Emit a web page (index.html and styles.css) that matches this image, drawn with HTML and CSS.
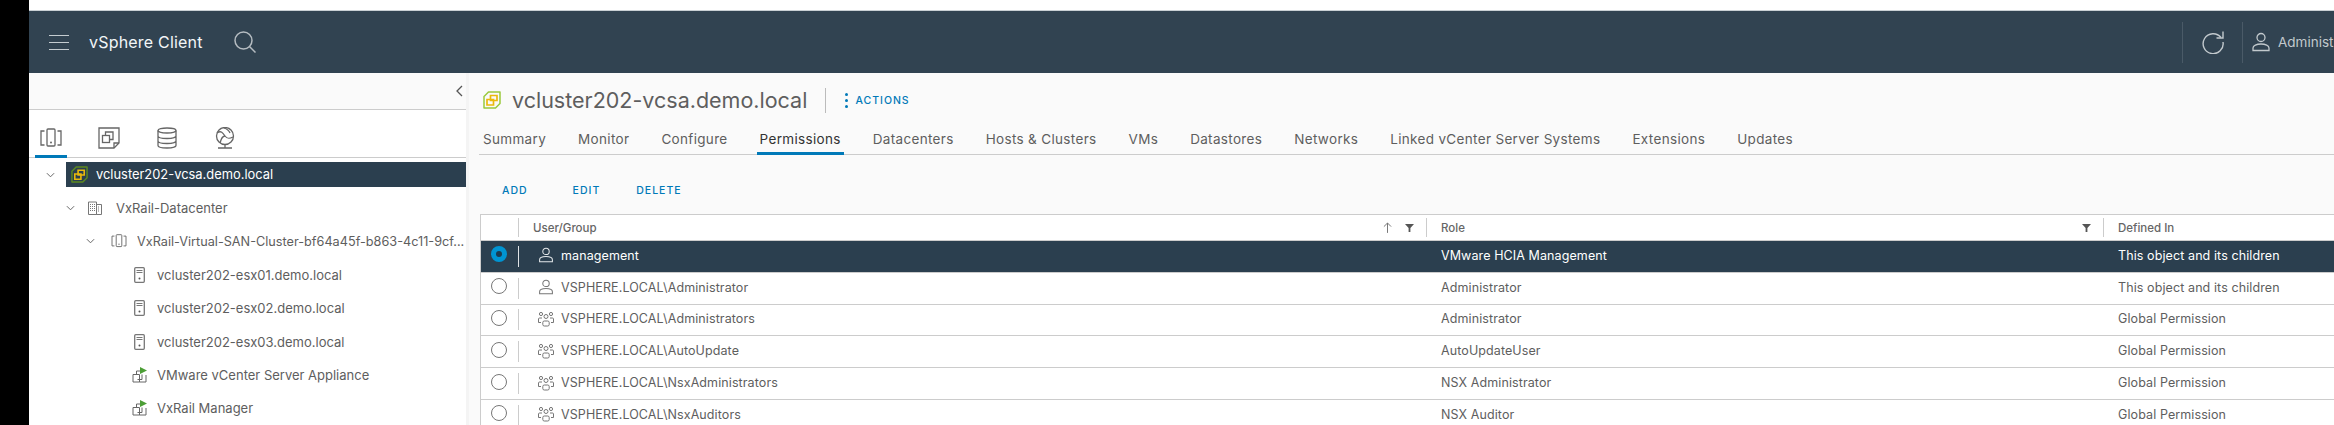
FILE: index.html
```html
<!DOCTYPE html>
<html lang="en">
<head>
<meta charset="utf-8">
<title>vSphere Client</title>
<link rel="stylesheet" href="styles.css">
</head>
<body>
<svg class="defs" width="0" height="0" aria-hidden="true">
  <defs>
    <symbol id="i-user" viewBox="0 0 18 20"><circle cx="9" cy="5.5" r="4" fill="none" stroke="currentColor" stroke-width="1.3"/><path d="M1 18.5v-2.6c0-2.2 3.5-3.9 8-3.9s8 1.700 8 3.900v2.600z" fill="none" stroke="currentColor" stroke-width="1.300"/></symbol>
    <symbol id="i-group" viewBox="0 0 16 16"><g fill="none" stroke="currentColor" stroke-width="1"><circle cx="8" cy="5.500" r="2"/><rect x="4.800" y="10" width="6.400" height="5" rx="1.500"/><circle cx="3" cy="3" r="1.600"/><circle cx="13" cy="3" r="1.600"/><path d="M4 7H1.500c-.6 0-1 .4-1 1v3.500H3M12 7h2.500c.6 0 1 .4 1 1v3.500H13"/></g></symbol>
    <symbol id="i-host" viewBox="0 0 11 16"><rect x=".7" y=".7" width="9.600" height="14.600" rx="1" fill="none" stroke="#777" stroke-width="1.300"/><path d="M2.500 3.500h6M2.500 5.500h6" stroke="#777"/><circle cx="5.500" cy="11.500" r="1" fill="#555"/></symbol>
    <symbol id="i-vm" viewBox="0 0 15 16"><g fill="none" stroke="#666" stroke-width="1"><path d="M1 7.500h6.500V15H1z"/><path d="M4.500 7.500V4H9M14 8v7H7.500"/><path d="M10 7.500v5H5.500"/></g><path d="M8 0l7 3.500L8 7z" fill="#4c9e36"/></symbol>
    <symbol id="i-cluster" viewBox="0 0 22 20"><g fill="none" stroke="currentColor" stroke-width="1.300"><rect x="7" y="1" width="8" height="17" rx="1"/><path d="M4.500 3H1v14h3.500M17.500 3H21v14h-3.500"/></g><circle cx="11" cy="14.500" r="1" fill="currentColor"/></symbol>
    <symbol id="i-vcenter" viewBox="0 0 18 18"><path d="M5.500 1H17v11.500L12.500 17H1V5.500z" fill="none" stroke="var(--vc-outer)" stroke-width="1.500" stroke-linejoin="round"/><path d="M4 8.500h3.500V4.500H14v5h-3.500V14H4zM7.500 8.500h3v1h-3z" fill="none" stroke="#eab90c" stroke-width="1.700"/></symbol>
    <symbol id="i-chev" viewBox="0 0 10 6"><path d="M1 1l4 4 4-4" fill="none" stroke="#666" stroke-width="1.100"/></symbol>
    <symbol id="i-funnel" viewBox="0 0 10 10"><path d="M0 1h10L6 5.500V10H4V5.500z" fill="#555"/></symbol>
  </defs>
</svg>
<div class="strip"></div>
<div class="app">
  <header class="topbar">
    <div class="burger"><span></span><span></span><span></span></div>
    <div class="brand">vSphere Client</div>
    <svg class="search" viewBox="0 0 22 22"><circle cx="9.500" cy="9.500" r="8.500" fill="none" stroke="currentColor" stroke-width="1.500"/><path d="M15.500 15.500l6 6" stroke="currentColor" stroke-width="1.500"/></svg>
    <div class="topbar-right">
      <div class="refresh-cell">
        <svg class="refresh" viewBox="0 0 24 24"><path d="M20 7.500A10 10 0 1 0 22 12" fill="none" stroke="currentColor" stroke-width="1.400"/><path d="M22 1.500V8h-6.500" fill="none" stroke="currentColor" stroke-width="1.400"/></svg>
      </div>
      <div class="user-cell">
        <svg class="top-user"><use href="#i-user"/></svg>
        <span class="user-name">Administrator@VSPHERE.LOCAL</span>
      </div>
    </div>
  </header>
  <div class="workspace">
    <aside class="sidebar">
      <div class="collapse-row">
        <svg class="collapse" viewBox="0 0 7 12"><path d="M6 1L1 6l5 5" fill="none" stroke="#555" stroke-width="1.300"/></svg>
      </div>
      <div class="view-tabs">
        <div class="view-tab active"><svg class="view-icon"><use href="#i-cluster"/></svg></div>
        <div class="view-tab"><svg class="view-icon" viewBox="0 0 22 22"><g fill="none" stroke="#666" stroke-width="1.300"><path d="M1 1h20v15l-5 5H1z"/><path d="M16 21v-5h5"/><rect x="4.500" y="8.500" width="7" height="7"/><path d="M7.500 8.500V5H15v7.500h-3.500"/></g></svg></div>
        <div class="view-tab"><svg class="view-icon" viewBox="0 0 20 22"><g fill="none" stroke="#666" stroke-width="1.300"><ellipse cx="10" cy="3.500" rx="9" ry="2.500"/><path d="M1 3.500v15C1 20 5 21 10 21s9-1 9-2.500v-15M1 9c0 1.500 4 2.500 9 2.500S19 10.500 19 9M1 14c0 1.500 4 2.500 9 2.500s9-1 9-2.500"/></g></svg></div>
        <div class="view-tab"><svg class="view-icon" viewBox="0 0 20 22"><g fill="none" stroke="#666" stroke-width="1.300"><circle cx="10" cy="9" r="8.500"/><path d="M2 6c4-3 6 0 8 3s4 3 8 1M5 16c1-4 3-7 5-7M9 1c3 1 5 2 6 5"/><path d="M3 21h14M10 17.500V21"/></g></svg></div>
      </div>
      <nav class="tree">
        <div class="node lvl-0 selected">
          <svg class="chev"><use href="#i-chev"/></svg>
          <div class="node-body"><svg class="ico-vc dark"><use href="#i-vcenter"/></svg><span>vcluster202-vcsa.demo.local</span></div>
        </div>
        <div class="node lvl-1">
          <svg class="chev"><use href="#i-chev"/></svg>
          <div class="node-body"><svg class="ico-dc" viewBox="0 0 14 14"><g fill="none" stroke="#777"><path d="M.5 1h8v12.500h-8zM8.500 3.500h5v10h-5z"/><path d="M2.500 3v8M4.500 3v8M6.500 3v8M10.500 5.500v6" stroke-dasharray="1 1"/></g></svg><span>VxRail-Datacenter</span></div>
        </div>
        <div class="node lvl-2">
          <svg class="chev"><use href="#i-chev"/></svg>
          <div class="node-body"><svg class="ico-cl"><use href="#i-cluster"/></svg><span class="clip">VxRail-Virtual-SAN-Cluster-bf64a45f-b863-4c11-9cf...</span></div>
        </div>
        <div class="node lvl-3"><div class="node-body"><svg class="ico-host"><use href="#i-host"/></svg><span>vcluster202-esx01.demo.local</span></div></div>
        <div class="node lvl-3"><div class="node-body"><svg class="ico-host"><use href="#i-host"/></svg><span>vcluster202-esx02.demo.local</span></div></div>
        <div class="node lvl-3"><div class="node-body"><svg class="ico-host"><use href="#i-host"/></svg><span>vcluster202-esx03.demo.local</span></div></div>
        <div class="node lvl-3 vm"><div class="node-body"><svg class="ico-vm"><use href="#i-vm"/></svg><span>VMware vCenter Server Appliance</span></div></div>
        <div class="node lvl-3 vm"><div class="node-body"><svg class="ico-vm"><use href="#i-vm"/></svg><span>VxRail Manager</span></div></div>
      </nav>
    </aside>
    <main class="content">
      <div class="title-row">
        <svg class="ico-title"><use href="#i-vcenter"/></svg>
        <h1 class="title">vcluster202-vcsa.demo.local</h1>
        <div class="actions"><span class="kebab"><i></i><i></i><i></i></span>ACTIONS</div>
      </div>
      <div class="tabs">
        <div class="tab">Summary</div>
        <div class="tab">Monitor</div>
        <div class="tab">Configure</div>
        <div class="tab active">Permissions</div>
        <div class="tab">Datacenters</div>
        <div class="tab">Hosts &amp; Clusters</div>
        <div class="tab">VMs</div>
        <div class="tab">Datastores</div>
        <div class="tab">Networks</div>
        <div class="tab">Linked vCenter Server Systems</div>
        <div class="tab">Extensions</div>
        <div class="tab">Updates</div>
      </div>
      <div class="toolbar">
        <span class="btn btn-add">ADD</span>
        <span class="btn btn-edit">EDIT</span>
        <span class="btn">DELETE</span>
      </div>
      <div class="grid">
        <div class="row head">
          <div class="cell radio-cell"></div>
          <div class="cell"><span class="head-label">User/Group</span>
            <svg class="sort" viewBox="0 0 10 12"><path d="M5 12V1M1 5l4-4 4 4" fill="none" stroke="#777" stroke-width="1.100"/></svg>
            <svg class="funnel"><use href="#i-funnel"/></svg></div>
          <div class="cell"><span class="head-label">Role</span><svg class="funnel"><use href="#i-funnel"/></svg></div>
          <div class="cell last">Defined In</div>
        </div>
        <div class="row sel">
          <div class="cell radio-cell"><span class="radio on"></span></div>
          <div class="cell"><svg class="ico-row"><use href="#i-user"/></svg>management</div>
          <div class="cell">VMware HCIA Management</div>
          <div class="cell last">This object and its children</div>
        </div>
        <div class="row">
          <div class="cell radio-cell"><span class="radio"></span></div>
          <div class="cell"><svg class="ico-row"><use href="#i-user"/></svg>VSPHERE.LOCAL\Administrator</div>
          <div class="cell">Administrator</div>
          <div class="cell last">This object and its children</div>
        </div>
        <div class="row">
          <div class="cell radio-cell"><span class="radio"></span></div>
          <div class="cell"><svg class="ico-row"><use href="#i-group"/></svg>VSPHERE.LOCAL\Administrators</div>
          <div class="cell">Administrator</div>
          <div class="cell last">Global Permission</div>
        </div>
        <div class="row">
          <div class="cell radio-cell"><span class="radio"></span></div>
          <div class="cell"><svg class="ico-row"><use href="#i-group"/></svg>VSPHERE.LOCAL\AutoUpdate</div>
          <div class="cell">AutoUpdateUser</div>
          <div class="cell last">Global Permission</div>
        </div>
        <div class="row">
          <div class="cell radio-cell"><span class="radio"></span></div>
          <div class="cell"><svg class="ico-row"><use href="#i-group"/></svg>VSPHERE.LOCAL\NsxAdministrators</div>
          <div class="cell">NSX Administrator</div>
          <div class="cell last">Global Permission</div>
        </div>
        <div class="row">
          <div class="cell radio-cell"><span class="radio"></span></div>
          <div class="cell"><svg class="ico-row"><use href="#i-group"/></svg>VSPHERE.LOCAL\NsxAuditors</div>
          <div class="cell">NSX Auditor</div>
          <div class="cell last">Global Permission</div>
        </div>
      </div>
    </main>
  </div>
</div>
</body>
</html>
```
FILE: styles.css
```css
* { box-sizing: border-box; }
html, body { margin: 0; height: 100%; overflow: hidden; }
body {
  display: flex;
  background: #fff;
  font-family: Inter, "Liberation Sans", sans-serif;
  color: #5e5e5e;
  font-size: 13px;
}
.defs { position: absolute; }
.strip { width: 29px; flex: none; background: #000; }
.app { flex: 1; min-width: 0; padding-top: 10px; display: flex; flex-direction: column; }

/* top bar */
.topbar {
  height: 63px; flex: none; display: flex; align-items: center;
  background: #314351; border-top: 1px solid #c9d0d4; color: #e8eef0;
}
.burger { width: 20px; margin-left: 20px; display: flex; flex-direction: column; gap: 6px; }
.burger span { height: 1px; background: #c4ccd0; }
.brand { margin-left: 20px; font-size: 16px; color: #f2f6f8; letter-spacing: .2px; }
.search { width: 22px; height: 22px; margin-left: 31px; color: #b5bcc1; }
.topbar-right { margin-left: auto; display: flex; align-items: stretch; height: 41px; color: #c2c9cd; width: 152px; overflow: hidden; flex: none; }
.refresh-cell { width: 61px; flex: none; display: flex; align-items: center; justify-content: center; border-left: 1px solid #4a5a67; border-right: 1px solid #4a5a67; }
.refresh { width: 24px; height: 24px; }
.user-cell { display: flex; align-items: center; padding-left: 9px; gap: 8px; white-space: nowrap; }
.top-user { width: 18px; height: 20px; flex: none; }
.user-name { font-size: 13.500px; }

.workspace { flex: 1; min-height: 0; display: flex; background: #fafafa; }

/* sidebar */
.sidebar { width: 437px; flex: none; background: #fff; }
.collapse-row { height: 37px; background: #fafafa; border-bottom: 1px solid #ccc; display: flex; align-items: center; justify-content: flex-end; padding-right: 3px; }
.collapse { width: 7px; height: 12px; }
.view-tabs { height: 48px; display: flex; padding-left: 6px; gap: 26px; border-bottom: 1px solid #ccc; }
.view-tab { width: 32px; height: 48px; display: flex; justify-content: center; padding-top: 17px; color: #666; }
.view-tab.active { border-bottom: 3px solid #0079b8; }
.view-icon { width: 22px; height: 22px; }
.tree { font-size: 13px; }
.node { height: 33.400px; display: flex; align-items: center; white-space: nowrap; }
.node-body { display: flex; align-items: center; flex: 1; min-width: 0; }
.chev { width: 9px; height: 6px; flex: none; }
.lvl-0 { padding-left: 17px; }
.lvl-0 .node-body { margin-left: 11px; height: 25px; background: #2b3f4f; color: #fff; padding-left: 5px; gap: 8px; font-size: 12.900px; }
.lvl-1 { padding-left: 37px; }
.lvl-1 .node-body { margin-left: 13px; gap: 14px; }
.lvl-2 { padding-left: 57px; }
.lvl-2 .node-body { margin-left: 16px; gap: 10px; font-size: 12.700px; }
.lvl-3 { padding-left: 105px; }
.lvl-3 .node-body { gap: 12px; }
.vm.lvl-3 { padding-left: 103px; }
.vm.lvl-3 .node-body { gap: 10px; }
.ico-vc { width: 17px; height: 17px; --vc-outer: #5d8a1f; flex: none; }
.ico-dc { width: 14px; height: 14px; flex: none; }
.ico-cl { width: 16px; height: 14px; color: #666; flex: none; }
.ico-host { width: 11px; height: 16px; flex: none; }
.ico-vm { width: 15px; height: 16px; flex: none; }
.clip { overflow: hidden; }

/* content */
.content { flex: 1; min-width: 0; margin-left: 3px; padding-left: 10px; overflow: hidden; background: #fafafa; box-shadow: -3px 0 0 #f4f4f4; }
.title-row { height: 54px; display: flex; align-items: center; padding-left: 4px; }
.ico-title { width: 18px; height: 18px; --vc-outer: #9ac93c; flex: none; }
.title { margin: 0 0 0 11px; padding-right: 18px; font-size: 21.500px; font-weight: 400; color: #5e5e5e; line-height: 25px; border-right: 1px solid #bbb; white-space: nowrap; }
.actions { margin-left: 19px; display: flex; align-items: center; gap: 7px; font-size: 10.500px; letter-spacing: 1px; color: #0079b8; font-weight: 500; }
.kebab { display: flex; flex-direction: column; gap: 3px; }
.kebab i { width: 3px; height: 3px; border-radius: 50%; background: #0079b8; }
.tabs { height: 28px; display: flex; gap: 26px; border-bottom: 1px solid #ccc; }
.tab { height: 28px; padding: 0 3px; font-size: 13.500px; letter-spacing: .33px; line-height: 25px; white-space: nowrap; }
.tab:first-child { margin-left: 1px; }
.tab.active { border-bottom: 3px solid #0079b8; color: #333; }
.toolbar { height: 59px; display: flex; align-items: center; padding-left: 23px; padding-top: 11px; font-size: 10.500px; letter-spacing: 1px; color: #0079b8; font-weight: 500; }
.btn-add { margin-right: 45px; }
.btn-edit { margin-right: 36px; }
.grid { border-top: 1px solid #ccc; border-left: 1px solid #ccc; margin-left: 1px; background: #fff; }
.row { display: grid; grid-template-columns: 37px 908px 677px 1fr; height: 31.800px; border-bottom: 1px solid #ccc; align-items: center; font-size: 12.500px; letter-spacing: .1px; white-space: nowrap; }
.row.head { height: 26px; font-size: 11.500px; font-weight: 500; color: #666; letter-spacing: 0; }
.row.sel { background: #2b3f4f; color: #fff; border-bottom-color: #ccc; }
.cell { display: flex; align-items: center; height: 21px; padding-left: 14px; border-left: 1px solid #ccc; padding-bottom: 2px; }
.radio-cell { border-left: 0; padding: 0 0 0 10px; }
.head .radio-cell { height: 18px; }
.head .cell { height: 19px; padding-right: 12px; padding-bottom: 0; }
.head .cell.last { padding-right: 0; }
.head-label { margin-right: auto; }
.sel .cell { border-left-color: #dfe3e6; }
.row:not(.head) .cell:nth-child(n+3) { border-left-color: transparent; }
.radio { width: 16px; height: 16px; border-radius: 50%; border: 1px solid #777; background: #fff; margin-top: -4px; }
.radio.on { border: 5.500px solid #0094d2; background: #1c3a50; }
.ico-row { width: 16px; height: 16px; margin-left: 5px; margin-right: 7px; color: #777; flex: none; }
.sel .ico-row { color: #e4e8ea; }
.sort { width: 9px; height: 11px; margin-right: 13px; }
.funnel { width: 9px; height: 9px; }
```
